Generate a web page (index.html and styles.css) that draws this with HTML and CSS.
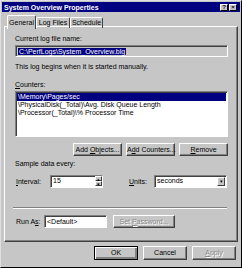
FILE: index.html
```html
<!DOCTYPE html>
<html lang="en">
<head>
    <meta charset="UTF-8">
    <title>System Overview Properties</title>
    <link rel="stylesheet" href="styles.css">
</head>
<body>
    <div class="window">
        <div class="titlebar">
            <span class="title">System Overview Properties</span>
            <div class="caption-btns">
                <span class="cap-btn">?</span>
                <span class="cap-btn">&#215;</span>
            </div>
        </div>

        <div class="tabs">
            <span class="tab active">General</span>
            <span class="tab">Log Files</span>
            <span class="tab">Schedule</span>
        </div>

        <div class="panel">
            <div class="label">Current log file name:</div>
            <div class="field wide"><span class="sel">C:\PerfLogs\System_Overview.blg</span></div>

            <div class="label note">This log begins when it is started manually.</div>

            <div class="label counters"><u>C</u>ounters:</div>
            <div class="listbox">
                <div class="item sel-row">\Memory\Pages/sec</div>
                <div class="item">\PhysicalDisk(_Total)\Avg. Disk Queue Length</div>
                <div class="item">\Processor(_Total)\% Processor Time</div>
            </div>

            <div class="btn-row">
                <span class="btn">Add <u>O</u>bjects...</span>
                <span class="btn">A<u>d</u>d Counters...</span>
                <span class="btn"><u>R</u>emove</span>
            </div>

            <div class="label sample">Sample data every:</div>
            <div class="interval-row">
                <span class="lbl-interval"><u>I</u>nterval:</span>
                <div class="field spin">
                    <span>15</span>
                    <div class="spin-btns">
                        <span class="arrow">&#9652;</span>
                        <span class="arrow">&#9662;</span>
                    </div>
                </div>
                <span class="lbl-units"><u>U</u>nits:</span>
                <div class="field combo">
                    <span>seconds</span>
                    <span class="drop">&#9662;</span>
                </div>
            </div>

            <div class="separator"></div>

            <div class="runas-row">
                <span class="lbl-runas">Run A<u>s</u>:</span>
                <div class="field runas">&lt;Default&gt;</div>
                <span class="btn disabled">Set <u>P</u>assword...</span>
            </div>
        </div>

        <div class="footer">
            <span class="btn default">OK</span>
            <span class="btn">Cancel</span>
            <span class="btn disabled"><u>A</u>pply</span>
        </div>
    </div>
</body>
</html>
```

FILE: styles.css
```css
body {
    margin: 0;
    font-family: "Liberation Sans", Arial, sans-serif;
    font-size: 7px;
    color: #000;
    background-color: #c6c6c6;
    white-space: nowrap;
}

u {
    text-decoration: underline;
}

.window {
    width: 242px;
    height: 268px;
    box-sizing: border-box;
    background-color: #c6c6c6;
    border: 1px solid;
    border-color: #dfdfdf #000 #000 #dfdfdf;
    padding: 1px;
}

.titlebar {
    height: 10px;
    background-color: #000080;
    display: flex;
    align-items: center;
    justify-content: space-between;
    padding: 0 3px 0 2px;
}

.title {
    color: white;
    font-weight: bold;
    font-size: 7px;
}

.caption-btns {
    display: flex;
    gap: 1px;
}

.cap-btn {
    width: 8px;
    height: 7px;
    background-color: #c6c6c6;
    box-sizing: border-box;
    border: 1px solid;
    border-color: #fff #000 #000 #fff;
    font-size: 6px;
    font-weight: bold;
    line-height: 5px;
    text-align: center;
}

.tabs {
    display: flex;
    padding: 3px 0 0 5px;
    height: 15px;
    box-sizing: border-box;
    position: relative;
    z-index: 1;
}

.tab {
    border: 1px solid;
    border-color: #fff #404040 transparent #fff;
    border-bottom: none;
    border-radius: 2px 2px 0 0;
    height: 11px;
    margin-top: 2px;
    box-sizing: border-box;
    line-height: 9px;
    text-align: center;
    width: 34px;
}

.tab.active {
    margin-top: 0;
    height: 14px;
    width: 29px;
    padding-top: 2px;
    background-color: #c6c6c6;
}

.tab:last-child {
    width: 33px;
}

.panel {
    margin: -1px 2px 0 2px;
    height: 216px;
    box-sizing: border-box;
    border: 1px solid;
    border-color: #fff #404040 #404040 #fff;
    box-shadow: inset -1px -1px #808080;
    padding: 8px 9px 0 10px;
}

.label {
    height: 8px;
    line-height: 8px;
}

.field {
    background-color: #fff;
    box-sizing: border-box;
    border: 1px solid;
    border-color: #808080 #fff #fff #808080;
    box-shadow: inset 1px 1px #404040;
    height: 12px;
    line-height: 10px;
    padding-left: 2px;
}

.field.wide {
    margin-top: 2px;
    background-color: #c6c6c6;
    padding-top: 1px;
}

.sel {
    background-color: #000080;
    color: white;
    padding: 0 1px;
}

.note {
    margin-top: 6px;
}

.counters {
    margin-top: 10px;
}

.listbox {
    margin-top: 2px;
    height: 46px;
    background-color: #fff;
    box-sizing: border-box;
    border: 1px solid;
    border-color: #808080 #fff #fff #808080;
    box-shadow: inset 1px 1px #404040;
    padding: 1px 1px 0 1px;
}

.item {
    height: 8px;
    line-height: 8px;
    padding-left: 1px;
}

.sel-row {
    background-color: #000080;
    color: white;
}

.btn-row {
    display: flex;
    justify-content: flex-end;
    gap: 4px;
    margin-top: 6px;
}

.btn {
    display: inline-block;
    box-sizing: border-box;
    height: 13px;
    line-height: 11px;
    text-align: center;
    border: 1px solid;
    border-color: #fff #404040 #404040 #fff;
    box-shadow: inset -1px -1px #808080;
    background-color: #c6c6c6;
}

.btn-row .btn {
    width: 49px;
}

.btn.disabled {
    color: #8a8a8a;
    text-shadow: 1px 1px #fff;
}

.btn.default {
    border-color: #000;
    box-shadow: inset 1px 1px #fff, inset -2px -2px #808080;
}

.sample {
    margin-top: 4px;
}

.interval-row {
    display: flex;
    align-items: center;
    margin-top: 7px;
}

.lbl-interval {
    width: 34px;
    padding-left: 1px;
}

.spin {
    width: 53px;
    height: 13px;
    display: flex;
    justify-content: space-between;
}

.spin-btns {
    display: flex;
    flex-direction: column;
    width: 7px;
}

.arrow {
    height: 5px;
    font-size: 5px;
    line-height: 5px;
    text-align: center;
    background-color: #c6c6c6;
    border: 1px solid;
    border-color: #fff #404040 #404040 #fff;
    box-sizing: border-box;
}

.lbl-units {
    margin-left: 26px;
    width: 25px;
}

.combo {
    width: 73px;
    height: 13px;
    display: flex;
    justify-content: space-between;
}

.drop {
    width: 8px;
    height: 9px;
    box-sizing: border-box;
    background-color: #c6c6c6;
    border: 1px solid;
    border-color: #fff #404040 #404040 #fff;
    font-size: 5px;
    line-height: 7px;
    text-align: center;
    margin: 1px 1px 0 0;
}

.separator {
    margin-top: 19px;
    height: 0;
    border-top: 1px solid #808080;
    border-bottom: 1px solid #fff;
    margin-right: 1px;
    margin-left: -2px;
}

.runas-row {
    display: flex;
    align-items: center;
    margin-top: 6px;
}

.lbl-runas {
    width: 28px;
    padding-left: 1px;
}

.field.runas {
    width: 63px;
    height: 13px;
    line-height: 11px;
}

.runas-row .btn {
    margin-left: 6px;
    width: 62px;
}

.footer {
    display: flex;
    justify-content: flex-end;
    gap: 5px;
    padding: 4px 4px 0 0;
}

.footer .btn {
    width: 44px;
    height: 14px;
    line-height: 12px;
}
```
